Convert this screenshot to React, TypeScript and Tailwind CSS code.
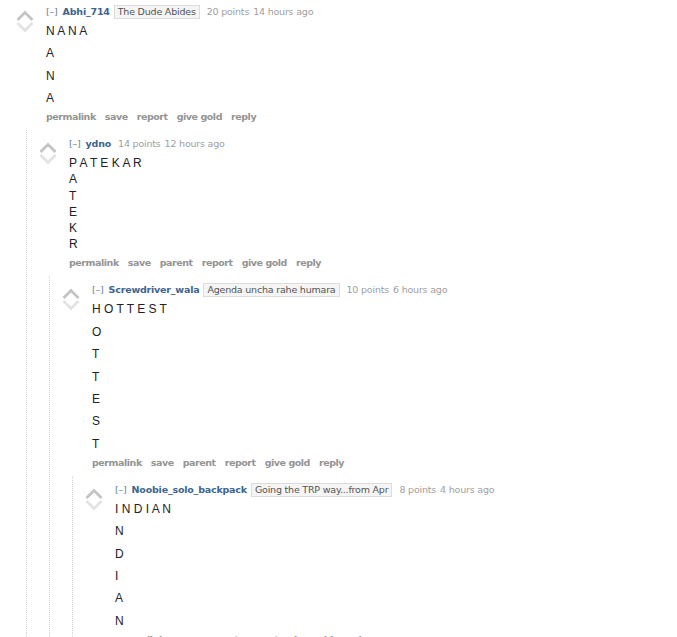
import React from "react";

interface CommentData {
  author: string;
  flair?: string;
  points: string;
  time: string;
  lines: string[];
  stacked?: boolean; // lines joined with <br> instead of separate paragraphs
  parent?: boolean;
  child?: CommentData;
}

const thread: CommentData = {
  author: "Abhi_714",
  flair: "The Dude Abides",
  points: "20 points",
  time: "14 hours ago",
  lines: ["N A N A", "A", "N", "A"],
  child: {
    author: "ydno",
    points: "14 points",
    time: "12 hours ago",
    lines: ["P A T E K A R", "A", "T", "E", "K", "R"],
    stacked: true,
    parent: true,
    child: {
      author: "Screwdriver_wala",
      flair: "Agenda uncha rahe humara",
      points: "10 points",
      time: "6 hours ago",
      lines: ["H O T T E S T", "O", "T", "T", "E", "S", "T"],
      parent: true,
      child: {
        author: "Noobie_solo_backpack",
        flair: "Going the TRP way...from Apr",
        points: "8 points",
        time: "4 hours ago",
        lines: ["I N D I A N", "N", "D", "I", "A", "N"],
        parent: true,
      },
    },
  },
};

function VoteArrows() {
  return (
    <svg width="20" height="24" viewBox="0 0 20 24" className="block">
      <polyline points="2.5,11 10,3.5 17.5,11" fill="none" stroke="#c4c4c4" strokeWidth="2.8" />
      <polyline points="2.5,14 10,21.5 17.5,14" fill="none" stroke="#e3e3e3" strokeWidth="2.8" />
    </svg>
  );
}

function Comment({ c, top }: { c: CommentData; top?: boolean }) {
  const actions = ["permalink", "save", ...(c.parent ? ["parent"] : []), "report", "give gold", "reply"];
  return (
    <div className={top ? "pt-[5px]" : "pt-[7px]"}>
      <div className="flex">
        <div className="w-[42px] shrink-0 pl-[11px] pt-[4px]">
          <VoteArrows />
        </div>
        <div className="min-w-0 flex-1">
          {/* tagline */}
          <div className="flex items-center h-[14px] whitespace-nowrap font-['DejaVu_Sans',sans-serif] text-[9.5px] tracking-[-0.2px] leading-[14px]">
            <span className="text-[#6b7f96]">[–]</span>
            <span className="ml-[5px] font-bold text-[#3d6591]">{c.author}</span>
            {c.flair && (
              <span className="ml-[4px] border border-[#dcdcdc] bg-[#f5f5f5] px-[3px] leading-[12px] text-[#545454]">
                {c.flair}
              </span>
            )}
            <span className="ml-[7px] text-[#a0a0a0]">{c.points}</span>
            <span className="ml-[4px] text-[#a0a0a0]">{c.time}</span>
          </div>

          {/* body */}
          <div className="mt-[4px] font-['Liberation_Sans',Arial,sans-serif] text-[12px] text-[#222]">
            {c.stacked ? (
              <p className="leading-[16.2px] whitespace-pre">
                {c.lines.map((l, i) => (
                  <React.Fragment key={i}>
                    {i > 0 && <br />}
                    {l}
                  </React.Fragment>
                ))}
              </p>
            ) : (
              <div className="flex flex-col gap-[6.4px]">
                {c.lines.map((l, i) => (
                  <p key={i} className="leading-[16px] whitespace-pre">
                    {l}
                  </p>
                ))}
              </div>
            )}
          </div>

          {/* actions */}
          <ul className="mt-[4px] flex gap-[9px] h-[14px] font-['DejaVu_Sans',sans-serif] text-[9.5px] tracking-[-0.45px] leading-[14px] font-bold text-[#949494]">
            {actions.map((a) => (
              <li key={a}>{a}</li>
            ))}
          </ul>
        </div>
      </div>

      {c.child && (
        <div className="ml-[22px] mt-[6px] border-l border-dotted border-[#d2d2d2]">
          <Comment c={c.child} />
        </div>
      )}
    </div>
  );
}

export default function App() {
  return (
    <div className="min-h-screen bg-white pl-[4px]">
      <Comment c={thread} top />
    </div>
  );
}
